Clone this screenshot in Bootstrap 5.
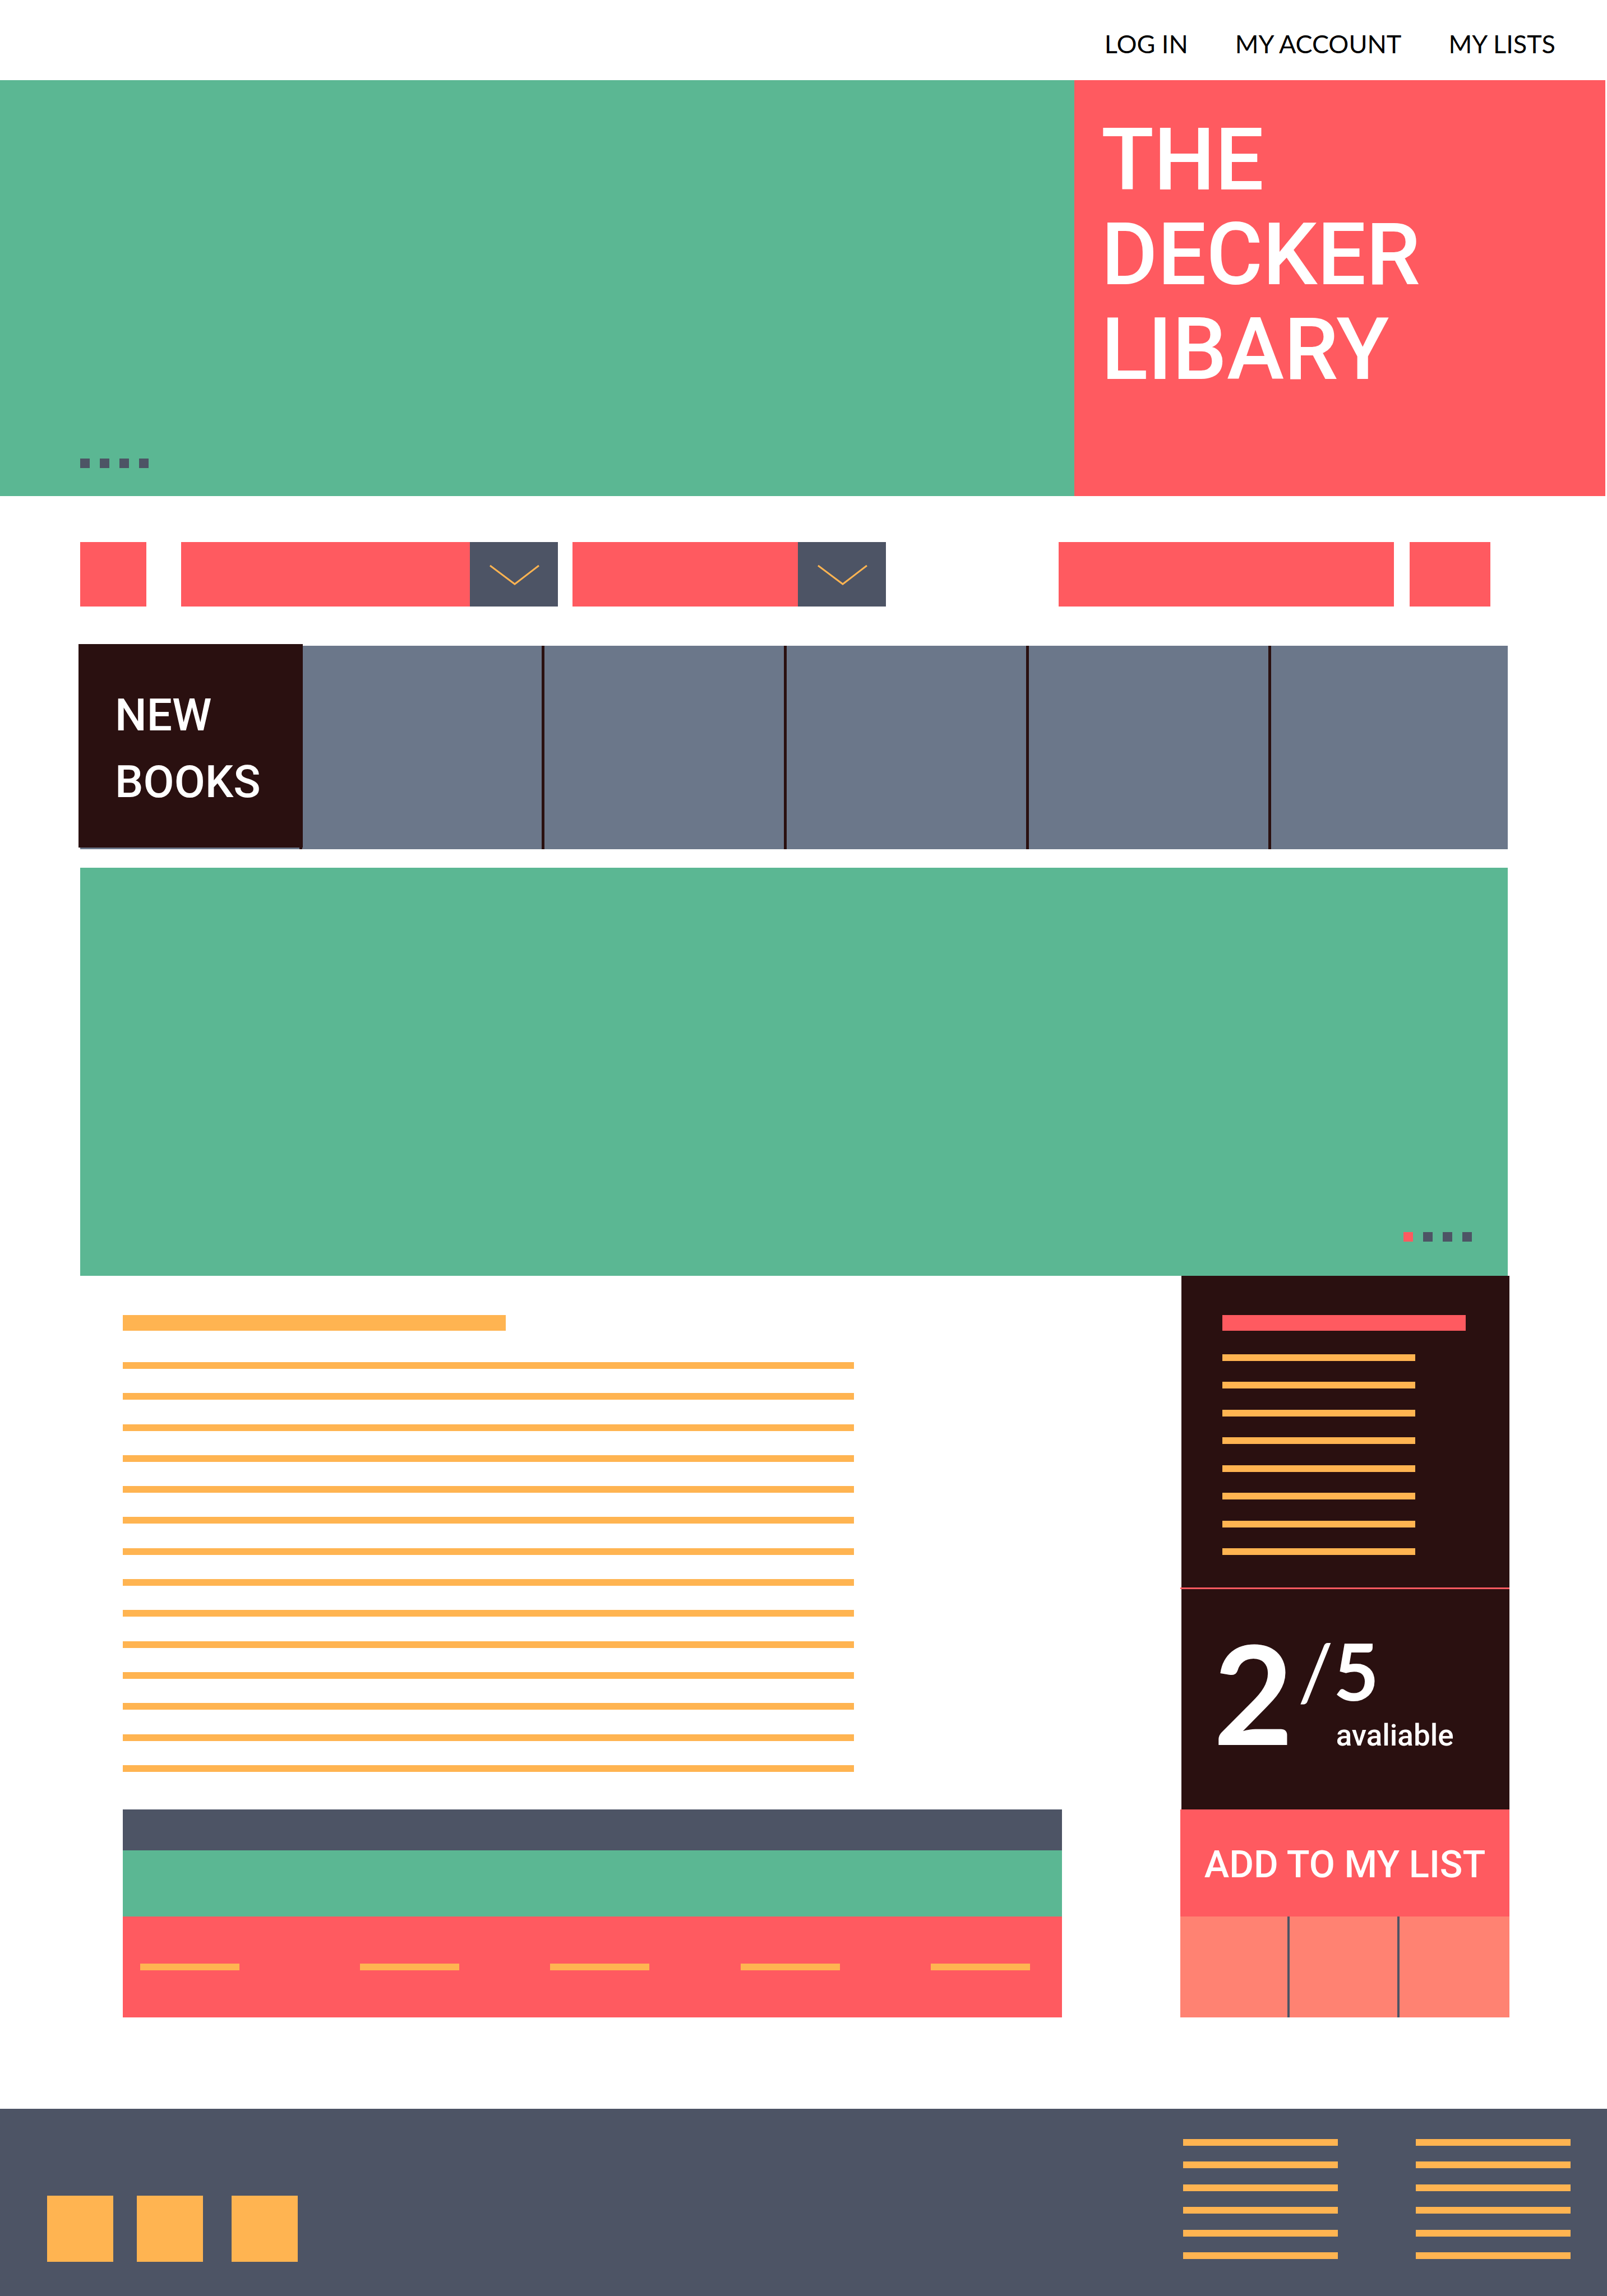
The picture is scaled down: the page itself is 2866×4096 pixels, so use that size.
<!DOCTYPE html>
<html lang="en">
<head>
<meta charset="utf-8">
<meta name="viewport" content="width=device-width, initial-scale=1">
<title>The Decker Libary</title>
<link href="https://cdn.jsdelivr.net/npm/bootstrap@5.3.0/dist/css/bootstrap.min.css" rel="stylesheet">
<style>
:root{--mint:#5bb793;--coral:#ff5a60;--salmon:#ff8272;--slate:#4d5465;--steel:#6b778a;--ink:#2a1010;--amber:#ffb451}
body{font-family:Roboto,"Liberation Sans",sans-serif;font-weight:500;background:#fff}
button,input,select{border:0;border-radius:0;padding:0}
.bg-mint{background:var(--mint)}
.bg-coral{background:var(--coral)}
.bg-salmon{background:var(--salmon)}
.bg-slate{background:var(--slate)}
.bg-steel{background:var(--steel)}
.bg-ink{background:var(--ink)}
.bg-amber{background:var(--amber)}

/* top links */
.top-links{height:143px;padding:12px 92px 0 0;gap:84px}
.top-links a{font:400 45px/56px Lato,sans-serif;color:#000;text-decoration:none}

/* hero */
.hero{height:742px;padding-right:3px}
.hero-slide{flex:1;padding:0 143px 50px}
.hero-title{flex:0 0 33.08%;padding:58px 48px 0}
.hero-title h1{font-size:154px;line-height:169px;font-weight:500;margin:0;color:#fff}
.pager{gap:18px}
.pager button{width:17px;height:17px}

.page-body{padding:82px 177px 163px 143px}

/* search tools */
.tool{height:115px}
.tool-home{width:118px;margin-right:62px}
.tool-filter{flex:0 1 672px;margin-right:26px}
.tool-filter.narrow{flex-basis:559px}
.tool-filter select{appearance:none;min-width:0}
.tool-filter span{width:157px}
.tool-search{flex:0 1 598px;min-width:0;margin-right:28px}
.tool-go{width:144px;margin-right:31px}

/* new books strip */
.shelf{height:363px;margin-top:70px}
.shelf-label{width:400px;margin:-3px -6px 3px -3px;padding:68px 0 0 65px;z-index:1}
.shelf-label h2{font-size:80px;line-height:119px;font-weight:500;color:#fff;margin:0}
.shelf-book{flex:432;border-left:5px solid var(--ink)}
.shelf-book:last-child{flex:427}

.feature{height:728px;margin-top:33px;padding:0 64px 61px}

/* article */
.story{flex:1;min-width:0;padding:70px 0 0 76px;margin-right:211px}
.headline{height:28px}
.story .headline{width:683px;margin-bottom:56px}
.copy div{height:12px}
.story .copy{height:731px;width:1304px;margin-bottom:67px}
.band-a{height:73px}
.band-b{height:118px}
.band-c{height:180px;padding:0 57px 0 31px}
.band-c a{width:177px;height:12px}
.band-c a:first-child{margin-right:52px}

/* side panel */
.side{width:587px;margin-right:-3px}
.side-dark{margin-left:2px}
.side-info{padding:70px 78px 58px 73px}
.side-info .headline{margin-bottom:42px}
.side-info .copy{height:358px;width:344px}
.side-rule{height:3px}
.stock{height:393px;color:#fff;padding:43px 0 0 57px}
.stock-have{font:700 246px/280px Lato,sans-serif}
.stock-of{font:700 140px/140px Lato,sans-serif;padding:32px 0 0 8px}
.stock-of i{font-weight:400;font-style:normal}
.stock-word{font-size:53px;line-height:60px;padding:16px 0 0 76px}
.btn-list{height:191px;color:#fff;font-size:67px;line-height:80px;font-weight:500;padding-top:4px}
.share{height:180px}
.share a{flex:194}
.share a:last-child{flex:199}
.share a+a{border-left:4px solid var(--slate)}

/* footer */
.foot{height:334px;padding:54px 65px 61px 84px}
.foot-social a{width:118px;height:118px}
.foot-social{gap:42px}
.foot-social a:last-child{margin-left:9px}
.foot-cols{gap:139px}
.foot-cols .copy{width:276px;height:214px}
</style>
</head>
<body>
<header>
  <nav class="top-links d-flex justify-content-end align-items-center" aria-label="Account">
    <a href="#">LOG IN</a><a href="#">MY ACCOUNT</a><a href="#">MY LISTS</a>
  </nav>
  <div class="hero d-flex">
    <div class="hero-slide bg-mint d-flex align-items-end">
      <div class="pager d-flex">
        <button class="bg-slate" aria-label="Slide 1"></button><button class="bg-slate" aria-label="Slide 2"></button><button class="bg-slate" aria-label="Slide 3"></button><button class="bg-slate" aria-label="Slide 4"></button>
      </div>
    </div>
    <div class="hero-title bg-coral"><h1>THE<br>DECKER<br>LIBARY</h1></div>
  </div>
</header>

<main class="page-body">
  <form class="d-flex">
    <button type="button" class="tool tool-home bg-coral" aria-label="Home"></button>
    <div class="tool tool-filter d-flex">
      <select class="bg-coral flex-fill" aria-label="Category"></select>
      <span class="bg-slate d-flex align-items-center justify-content-center"><svg width="90" height="40" viewBox="0 0 90 40" fill="none" stroke="#ffb451" stroke-width="3"><path d="M2 4 46 37 89 4"/></svg></span>
    </div>
    <div class="tool tool-filter narrow d-flex">
      <select class="bg-coral flex-fill" aria-label="Format"></select>
      <span class="bg-slate d-flex align-items-center justify-content-center"><svg width="90" height="40" viewBox="0 0 90 40" fill="none" stroke="#ffb451" stroke-width="3"><path d="M2 4 46 37 89 4"/></svg></span>
    </div>
    <input type="search" class="tool tool-search bg-coral ms-auto" aria-label="Search">
    <button type="submit" class="tool tool-go bg-coral" aria-label="Go"></button>
  </form>

  <section class="shelf bg-steel d-flex">
    <div class="shelf-label bg-ink"><h2>NEW<br>BOOKS</h2></div>
    <a href="#" class="shelf-book" aria-label="Book 1"></a>
    <a href="#" class="shelf-book" aria-label="Book 2"></a>
    <a href="#" class="shelf-book" aria-label="Book 3"></a>
    <a href="#" class="shelf-book" aria-label="Book 4"></a>
    <a href="#" class="shelf-book" aria-label="Book 5"></a>
  </section>

  <section class="feature bg-mint d-flex align-items-end justify-content-end">
    <div class="pager d-flex">
      <button class="bg-coral" aria-label="Feature 1"></button><button class="bg-slate" aria-label="Feature 2"></button><button class="bg-slate" aria-label="Feature 3"></button><button class="bg-slate" aria-label="Feature 4"></button>
    </div>
  </section>

  <div class="d-flex">
    <article class="story">
      <div class="headline bg-amber"></div>
      <div class="copy d-flex flex-column justify-content-between">
        <div class="bg-amber"></div><div class="bg-amber"></div><div class="bg-amber"></div><div class="bg-amber"></div><div class="bg-amber"></div><div class="bg-amber"></div><div class="bg-amber"></div>
        <div class="bg-amber"></div><div class="bg-amber"></div><div class="bg-amber"></div><div class="bg-amber"></div><div class="bg-amber"></div><div class="bg-amber"></div><div class="bg-amber"></div>
      </div>
      <div class="band-a bg-slate"></div>
      <div class="band-b bg-mint"></div>
      <div class="band-c bg-coral d-flex align-items-center justify-content-between">
        <a href="#" class="bg-amber" aria-label="Tab 1"></a><a href="#" class="bg-amber" aria-label="Tab 2"></a><a href="#" class="bg-amber" aria-label="Tab 3"></a><a href="#" class="bg-amber" aria-label="Tab 4"></a><a href="#" class="bg-amber" aria-label="Tab 5"></a>
      </div>
    </article>

    <aside class="side">
      <div class="side-dark side-info bg-ink">
        <div class="headline bg-coral"></div>
        <div class="copy d-flex flex-column justify-content-between">
          <div class="bg-amber"></div><div class="bg-amber"></div><div class="bg-amber"></div><div class="bg-amber"></div>
          <div class="bg-amber"></div><div class="bg-amber"></div><div class="bg-amber"></div><div class="bg-amber"></div>
        </div>
      </div>
      <div class="side-rule bg-coral"></div>
      <div class="side-dark stock bg-ink d-flex">
        <div class="stock-have">2</div>
        <div>
          <div class="stock-of"><i>/</i>5</div>
          <div class="stock-word">avaliable</div>
        </div>
      </div>
      <button class="btn-list bg-coral w-100 d-block">ADD TO MY LIST</button>
      <div class="share bg-salmon d-flex">
        <a href="#" aria-label="Share"></a><a href="#" aria-label="Save"></a><a href="#" aria-label="Print"></a>
      </div>
    </aside>
  </div>
</main>

<footer class="foot bg-slate d-flex justify-content-between">
  <div class="foot-social d-flex align-self-end">
    <a href="#" class="bg-amber" aria-label="Facebook"></a><a href="#" class="bg-amber" aria-label="Twitter"></a><a href="#" class="bg-amber" aria-label="Instagram"></a>
  </div>
  <div class="foot-cols d-flex">
    <div class="copy d-flex flex-column justify-content-between">
      <div class="bg-amber"></div><div class="bg-amber"></div><div class="bg-amber"></div><div class="bg-amber"></div><div class="bg-amber"></div><div class="bg-amber"></div>
    </div>
    <div class="copy d-flex flex-column justify-content-between">
      <div class="bg-amber"></div><div class="bg-amber"></div><div class="bg-amber"></div><div class="bg-amber"></div><div class="bg-amber"></div><div class="bg-amber"></div>
    </div>
  </div>
</footer>
<script src="https://cdn.jsdelivr.net/npm/bootstrap@5.3.0/dist/js/bootstrap.bundle.min.js"></script>
</body>
</html>
